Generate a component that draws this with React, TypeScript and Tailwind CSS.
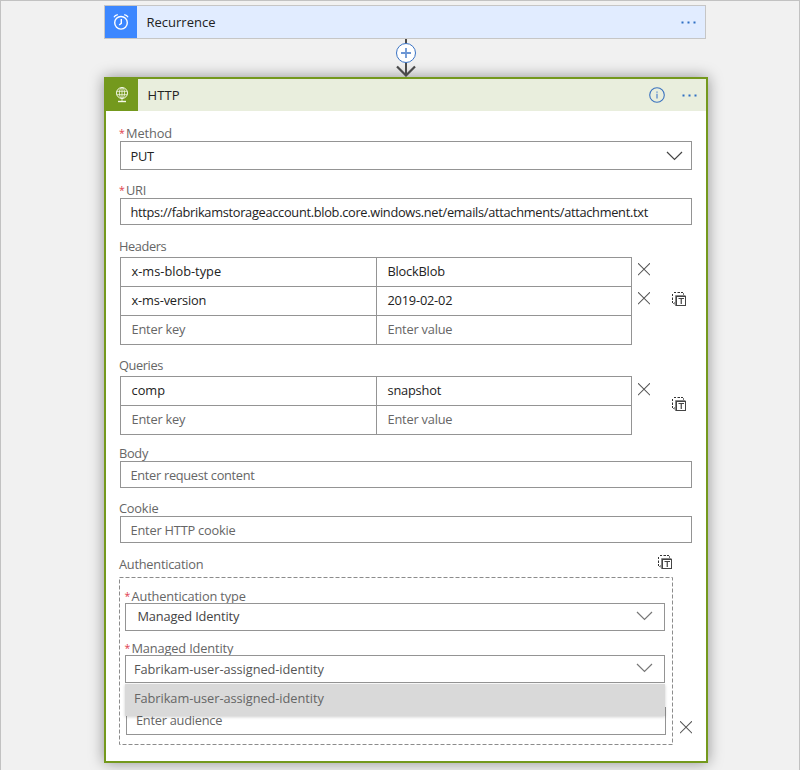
import type { ReactNode } from "react";

function Label({ children, required = false, className = "tracking-[-0.1px]" }: { children: ReactNode; required?: boolean; className?: string }) {
  return (
    <div className={`-ml-px flex h-4 items-center text-[12.8px] leading-4 text-[#666] ${className}`}>
      {required && <span className="w-[7px] text-[10.5px] leading-3 tracking-normal text-[#e0404c]">*</span>}
      <span>{children}</span>
    </div>
  );
}

function Field({ children, className = "" }: { children: ReactNode; className?: string }) {
  return <div className={`flex items-center border border-[#949494] bg-white ${className}`}>{children}</div>;
}

function Chevron({ color = "#444", className = "" }: { color?: string; className?: string }) {
  return (
    <svg width="17" height="10" viewBox="0 0 17 10" fill="none" className={`ml-auto ${className}`}>
      <path d="M1 1L8.5 8.5L16 1" stroke={color} strokeWidth="1.2" />
    </svg>
  );
}

function Cross({ className = "" }: { className?: string }) {
  return (
    <svg width="12" height="13" viewBox="0 0 12 13" fill="none" className={className}>
      <path d="M0 0.200L12 12.200M12 0.200L0 12.200" stroke="#555" strokeWidth="1.050" />
    </svg>
  );
}

function TextMode({ className = "" }: { className?: string }) {
  return (
    <svg width="15" height="15" viewBox="0 0 15 15" fill="none" className={className}>
      <path d="M2 .5H4M5.500 .5H8M9 .5H11M.5 2V4M.5 5.500V8M.5 9V11" stroke="#333" />
      <path d="M11.500 1V3M1 11.500H3" stroke="#777" />
      <path d="M3.500 14V3.500H13.500" stroke="#888" />
      <path d="M2.500 10V12.500" stroke="#999" />
      <rect x="4.500" y="4.500" width="9" height="9" fill="#fff" stroke="#444" />
      <path d="M6.500 6.500H12M9.250 6.500V12" stroke="#444" strokeWidth="1.200" />
    </svg>
  );
}

function Dots() {
  return (
    <svg width="16" height="3" viewBox="0 0 16 3" fill="#2f6fc4">
      <rect x="0.500" y="0.500" width="2" height="2" />
      <rect x="6.500" y="0.500" width="2" height="2" />
      <rect x="12.500" y="0.500" width="2" height="2" />
    </svg>
  );
}

function PairTable({ rows }: { rows: string[][] }) {
  return (
    <div className="mt-[3px] w-[512px] border-t border-l border-[#949494]">
      {rows.map(([key, value], i) => {
        const tone = key === "Enter key" ? "text-[#666]" : "text-[#222]";
        const keyTracking = key === "Enter key" ? "tracking-[-0.200px]" : key === "x-ms-version" ? "tracking-[-0.150px]" : "tracking-[0px]";
        return (
          <div key={i} className={`flex ${tone}`}>
            <div className={`flex h-[29px] w-64 items-center border-r border-b border-[#949494] pb-[3px] pl-[10.500px] ${keyTracking}`}>{key}</div>
            <div className="flex h-[29px] w-[255px] items-center border-r border-b border-[#949494] pb-[3px] pl-[10.500px] tracking-[-0.200px]">{value}</div>
          </div>
        );
      })}
    </div>
  );
}

export default function App() {
  return (
    <div className="h-[770px] w-[800px] overflow-hidden border-t border-r border-l border-[#c2c2c2] bg-[#f1f1f1] pl-[103px] pt-1 font-['Open_Sans','Noto_Sans',sans-serif] text-[12.8px] tracking-[-0.1px] leading-4 text-[#222]">
      <div className="flex h-[34px] w-[602px] items-center border border-[#c6c6c6] bg-[#e1ecff]">
        <div className="flex h-8 w-8 items-center justify-center bg-[#3c87ff]">
          <svg width="16" height="18" viewBox="0 0 16 18" fill="none" stroke="#fff" strokeWidth="1.400">
            <circle cx="8" cy="9.800" r="6.300" />
            <path d="M8.300 6V10.300L6.200 12M1 4.300Q2 2 4.800 1.600M15 4.300Q14 2 11.200 1.600" />
          </svg>
        </div>
        <span className="ml-[9.500px] text-[13px] tracking-[0px]">Recurrence</span>
        <div className="mr-2 ml-auto"><Dots /></div>
      </div>

      <div className="flex h-[38px] w-[604px] justify-center">
        <svg width="22" height="38" viewBox="0 0 22 38" fill="none" className="relative z-10">
          <path d="M11 0V36" stroke="#4a4a4a" strokeWidth="2" />
          <path d="M2 27.500L11 36.500L20 27.500" stroke="#4a4a4a" strokeWidth="2.200" />
          <circle cx="11" cy="14" r="9.500" fill="#fff" stroke="#3a73c4" />
          <path d="M11 9V19M6 14H16" stroke="#6c96d4" strokeWidth="1.800" />
        </svg>
      </div>

      <div className="h-[686px] w-[604px] border-2 border-[#74991d] bg-white shadow-[0_0_14px_rgba(0,0,0,0.4)]">
        <div className="flex h-8 items-center bg-[#e9eedd]">
          <div className="flex h-8 w-8 items-center justify-center bg-[#74991d]">
            <svg width="14" height="16" viewBox="0 0 14 16" fill="none" stroke="#f4f8e8" strokeWidth="1">
              <circle cx="7" cy="6" r="5.500" />
              <ellipse cx="7" cy="6" rx="2.600" ry="5.400" strokeWidth=".8" />
              <path d="M1.700 4.300H12.300M1.700 7.700H12.300M7 .5V14" strokeWidth=".8" />
              <path d="M3 14.500H11" strokeWidth="1.400" />
            </svg>
          </div>
          <span className="ml-[9.500px] text-[13px] tracking-[0.1px]">HTTP</span>
          <svg width="16" height="16" viewBox="0 0 16 16" fill="none" className="ml-auto">
            <circle cx="8" cy="8" r="7.300" stroke="#3b73bf" strokeWidth="1.100" />
            <path d="M8 6.700V11.500M8 4.500V5.700" stroke="#6d98cf" strokeWidth="1.500" />
          </svg>
          <div className="mr-2 ml-[17px]"><Dots /></div>
        </div>

        <div className="flex flex-col pt-[14px] pr-[14px] pl-[14px]">
          <Label required>Method</Label>
          <Field className="h-[29px] pl-[9.500px] tracking-[-0.300px]">PUT<Chevron className="mr-2" /></Field>

          <Label required className="mt-3 tracking-[-0.300px]">URI</Label>
          <Field className="h-[27px] pl-[9.500px] tracking-[-0.300px]">https://fabrikamstorageaccount.blob.core.windows.net/emails/attachments/attachment.txt</Field>

          <Label className="mt-[13px] tracking-[-0.400px]">Headers</Label>
          <div className="flex">
            <PairTable rows={[["x-ms-blob-type", "BlockBlob"], ["x-ms-version", "2019-02-02"], ["Enter key", "Enter value"]]} />
            <div className="mt-[9px] ml-[6px] flex flex-col gap-4"><Cross /><Cross /></div>
            <TextMode className="mt-[38px] ml-[22px]" />
          </div>

          <Label className="mt-3 tracking-[-0.400px]">Queries</Label>
          <div className="flex">
            <PairTable rows={[["comp", "snapshot"], ["Enter key", "Enter value"]]} />
            <Cross className="mt-[10px] ml-[6px]" />
            <TextMode className="mt-6 ml-[22px]" />
          </div>

          <Label className="mt-[10px] tracking-[-0.300px]">Body</Label>
          <Field className="h-[27px] pl-[9.500px] tracking-[-0.300px] text-[#666]">Enter request content</Field>

          <Label className="mt-3 tracking-[-0.200px]">Cookie</Label>
          <Field className="h-[27px] pl-[9.500px] tracking-[-0.200px] text-[#666]">Enter HTTP cookie</Field>

          <div className="mt-[11px] flex h-[23px]">
            <Label className="mt-[2px] tracking-[-0.250px]">Authentication</Label>
            <TextMode className="mt-px mr-[19px] ml-auto" />
          </div>

          <div className="-ml-px flex">
            <div className="relative h-[168px] w-[554px]">
              <svg width="554" height="168" fill="none" className="absolute inset-0">
                <rect x=".5" y=".5" width="553" height="167" stroke="#8c8c8c" strokeDasharray="4 2" />
              </svg>
              <div className="relative flex flex-col pt-[11px] pl-[6px]">
                <Label required className="h-[15px] pl-[0.500px] tracking-[-0.150px]">Authentication type</Label>
                <Field className="h-7 w-[540px] pb-[2px] pl-[11.500px] tracking-[-0.150px]"><span className="text-[#444]">Managed Identity</span><Chevron color="#777" className="mr-[11px]" /></Field>
                <Label required className="mt-[9px] h-[15px] pl-[0.500px] tracking-[-0.150px]">Managed Identity</Label>
                <Field className="h-7 w-[540px] pl-2 tracking-[-0.060px]"><span className="text-[#555]">Fabrikam-user-assigned-identity</span><Chevron color="#777" className="mr-[11px] -mt-[2px]" /></Field>
                <div className="absolute top-[107px] left-[6px] z-10 flex h-8 w-[540px] items-center bg-[#d9d9d9] pb-1 pl-[9px] tracking-[-0.060px] text-[#666] shadow-[0_1px_3px_rgba(0,0,0,0.2)]">Fabrikam-user-assigned-identity</div>
                <Field className="mt-6 ml-px h-7 w-[540px] pb-[2px] pl-[9px] tracking-[-0.250px] text-[#666]">Enter audience</Field>
              </div>
            </div>
            <Cross className="mt-[144px] ml-[6.500px]" />
          </div>
        </div>
      </div>
    </div>
  );
}
